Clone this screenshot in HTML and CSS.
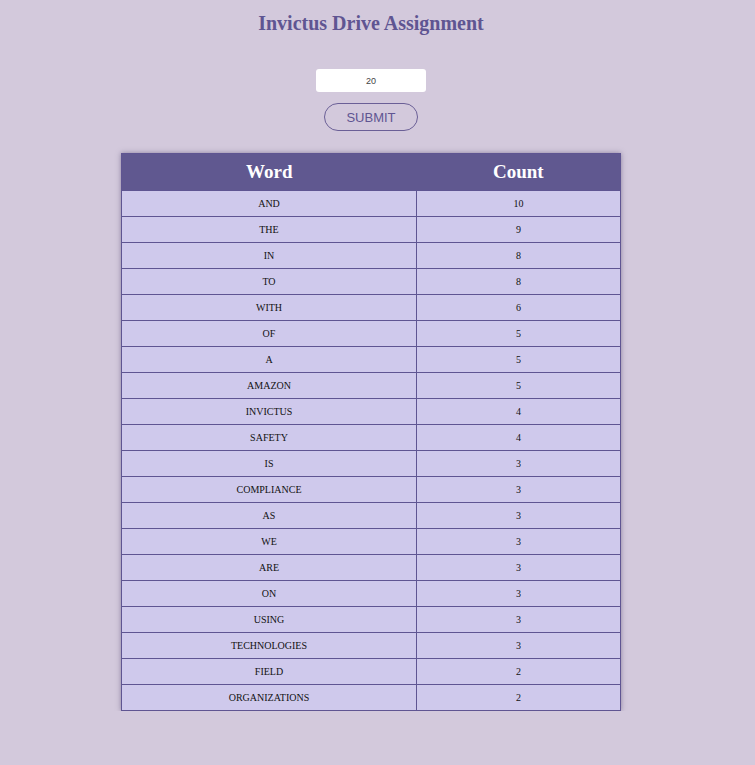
FILE: index.html
```html
<!DOCTYPE html>
<html>
<head>
<meta charset="utf-8">
<link rel="stylesheet" href="styles.css">
</head>
<body>
<div class="page">
  <h1 class="title">Invictus Drive Assignment</h1>
  <form class="form">
    <input class="num" type="text" value="20">
    <button class="submit" type="button">SUBMIT</button>
  </form>
  <table class="words">
    <thead>
      <tr><th>Word</th><th>Count</th></tr>
    </thead>
    <tbody>
      <tr><td>AND</td><td>10</td></tr>
      <tr><td>THE</td><td>9</td></tr>
      <tr><td>IN</td><td>8</td></tr>
      <tr><td>TO</td><td>8</td></tr>
      <tr><td>WITH</td><td>6</td></tr>
      <tr><td>OF</td><td>5</td></tr>
      <tr><td>A</td><td>5</td></tr>
      <tr><td>AMAZON</td><td>5</td></tr>
      <tr><td>INVICTUS</td><td>4</td></tr>
      <tr><td>SAFETY</td><td>4</td></tr>
      <tr><td>IS</td><td>3</td></tr>
      <tr><td>COMPLIANCE</td><td>3</td></tr>
      <tr><td>AS</td><td>3</td></tr>
      <tr><td>WE</td><td>3</td></tr>
      <tr><td>ARE</td><td>3</td></tr>
      <tr><td>ON</td><td>3</td></tr>
      <tr><td>USING</td><td>3</td></tr>
      <tr><td>TECHNOLOGIES</td><td>3</td></tr>
      <tr><td>FIELD</td><td>2</td></tr>
      <tr><td>ORGANIZATIONS</td><td>2</td></tr>
    </tbody>
  </table>
</div>
</body>
</html>
```
FILE: styles.css
```css
html, body {
  margin: 0;
  padding: 0;
  background: #d3c9dc;
}
body {
  font-family: "Liberation Serif", "Times New Roman", serif;
  color: #000;
}
.page {
  display: flex;
  flex-direction: column;
  align-items: center;
  padding-top: 11px;
  padding-right: 13px;
}
.title {
  margin: 0;
  font-size: 20px;
  line-height: 24px;
  font-weight: bold;
  color: #5f5592;
}
.form {
  display: flex;
  flex-direction: column;
  align-items: center;
  margin-top: 34px;
}
.num {
  box-sizing: border-box;
  width: 110px;
  height: 23px;
  border: none;
  border-radius: 3px;
  background: #fff;
  text-align: center;
  font-family: "Liberation Sans", Arial, sans-serif;
  font-size: 9px;
  color: #444;
  padding: 0;
  outline: none;
}
.submit {
  box-sizing: border-box;
  margin-top: 11px;
  width: 94px;
  height: 28px;
  border: 1px solid #6a5f96;
  border-radius: 14px;
  background: transparent;
  color: #5f5592;
  font-family: "Liberation Sans", Arial, sans-serif;
  font-size: 13px;
  padding: 0;
}
.words {
  margin-top: 22px;
  width: 500px;
  border-collapse: collapse;
  border: 1px solid #5f5592;
  box-shadow: 0 0 5px rgba(80, 70, 110, 0.55);
}
.words th {
  background: #605890;
  color: #fff;
  font-size: 19px;
  font-weight: bold;
  height: 36px;
  padding: 0;
  border: none;
}
.words td {
  background: #cfc9ec;
  border: 1px solid #5f5592;
  font-size: 10px;
  color: #111;
  text-align: center;
  height: 25px;
  padding: 0;
}
.words th:first-child,
.words td:first-child {
  width: 294px;
}
```
